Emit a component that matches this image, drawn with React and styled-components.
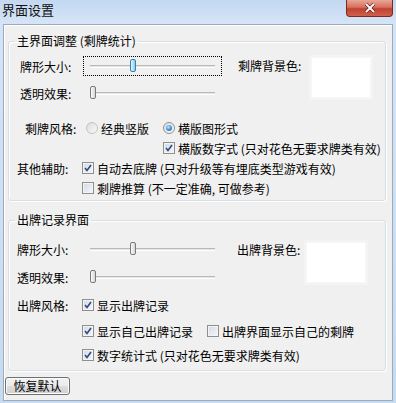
import styled, { createGlobalStyle } from "styled-components";

const GlobalStyle = createGlobalStyle`
  html, body { margin: 0; padding: 0; background: #c4d8ef; }
  body {
    font-family: "Noto Sans CJK SC", "Noto Sans", sans-serif;
    font-size: 12px;
    color: #000;
  }
`;

const Window = styled.div`
  width: 396px;
  height: 403px;
  box-sizing: border-box;
  display: flex;
  flex-direction: column;
  padding: 0 3px 2px 3px;
  background: linear-gradient(to bottom, #c3d8f1 0, #d4e4f6 22px, #c6daf0 100%);
`;

const TitleBar = styled.div`
  height: 24px;
  flex: none;
  display: flex;
  justify-content: space-between;
  align-items: flex-start;
`;

const Title = styled.span`
  margin-left: -1px;
  line-height: 20px;
  font-size: 13px;
  color: #111;
`;

const CloseButton = styled.div`
  width: 47px;
  height: 17px;
  box-sizing: border-box;
  border: 1px solid #7a2a20;
  border-top: none;
  border-radius: 0 0 4px 4px;
  background: linear-gradient(to bottom, #e8a797 0%, #d76f5e 45%, #c2402f 55%, #d0604c 100%);
  display: flex;
  align-items: center;
  justify-content: center;
`;

const Body = styled.div`
  flex: 1;
  border: 1px solid #9eabba;
  background: #f0f0f0;
  box-shadow: inset 1px 1px 0 #fff;
  display: flex;
  flex-direction: column;
  align-items: flex-start;
`;

const Group = styled.fieldset`
  align-self: stretch;
  margin: ${(p) => p.$top}px 6px 0 4px;
  padding: 0 0 ${(p) => p.$bottom}px 0;
  border: 1px solid #d5dfe5;
  border-radius: 3px;
  box-shadow: inset 1px 1px 0 #fff, 1px 1px 0 #fff;
  min-inline-size: 0;
`;

const Legend = styled.legend`
  margin-left: 6px;
  padding: 0 2px;
  line-height: 16px;
`;

const Top = styled.div`
  display: flex;
  align-items: flex-start;
  margin-top: ${(p) => p.$mt}px;
`;

const SliderCol = styled.div`
  display: flex;
  flex-direction: column;
`;

const Row = styled.div`
  display: flex;
  align-items: center;
  height: 20px;
  margin-top: ${(p) => p.$mt || 0}px;
  padding-left: ${(p) => p.$indent || 0}px;
  white-space: nowrap;
`;

const Label = styled.span`
  width: ${(p) => p.$w}px;
  flex: none;
`;

const ColorPick = styled.div`
  display: flex;
  align-items: flex-start;
  margin-left: ${(p) => p.$ml}px;
  margin-top: ${(p) => p.$mt}px;
`;

const ColorLabel = styled.span`
  width: ${(p) => p.$w}px;
  line-height: 20px;
  white-space: nowrap;
`;

const Swatch = styled.div`
  width: 58px;
  height: 39px;
  margin-top: ${(p) => p.$mt}px;
  background: #fff;
  box-shadow: 0 0 0 1px #f7f7f7, 0 0 0 3px #f4f4f4;
`;

const SliderBox = styled.div`
  width: 139px;
  height: 20px;
  box-sizing: border-box;
  border: 1px dotted ${(p) => (p.$focused ? "#000" : "transparent")};
  padding: 0 6px;
  display: flex;
  align-items: center;
`;

const Track = styled.div`
  position: relative;
  flex: 1;
  height: 3px;
  box-sizing: border-box;
  border-top: 1px solid #b9b9b9;
  border-bottom: 1px solid #fff;
  background: #e4e4e4;
`;

const Thumb = styled.div`
  position: absolute;
  top: 50%;
  width: 6px;
  height: 13px;
  margin-top: -7px;
  box-sizing: border-box;
  border-radius: 2px;
  border: 1px solid ${(p) => (p.$focused ? "#3c7fb1" : "#7a7a7a")};
  background: ${(p) =>
    p.$focused
      ? "linear-gradient(to right, #e5f6fd, #7fd0f0)"
      : "linear-gradient(to right, #fbfbfb, #d6d6d6)"};
`;

const Choice = styled.span`
  display: inline-flex;
  align-items: center;
  gap: 3px;
  margin-left: ${(p) => p.$ml || 0}px;
`;

const Box = styled.span`
  width: 12px;
  height: 12px;
  box-sizing: border-box;
  border: 1px solid #8e8f8f;
  background: linear-gradient(135deg, #d2dae4, #f6f7f9);
  box-shadow: inset 0 0 0 1px #f4f4f4;
  display: inline-flex;
  align-items: center;
  justify-content: center;
  flex: none;
`;

const Circle = styled.span`
  width: 12px;
  height: 12px;
  box-sizing: border-box;
  border-radius: 50%;
  border: 1px solid ${(p) => (p.$faded ? "#c2c2c2" : "#8e8f8f")};
  background: linear-gradient(135deg, #dcdcdc, #fafafa);
  display: inline-flex;
  align-items: center;
  justify-content: center;
  flex: none;
`;

const Dot = styled.span`
  width: 6px;
  height: 6px;
  border-radius: 50%;
  background: radial-gradient(circle at 40% 35%, #c4e9fc 0, #3a8fd3 55%, #1b4f8e 100%);
`;

const Button = styled.button`
  margin: 6px 0 0 1px;
  width: 65px;
  height: 18px;
  padding: 0;
  font: inherit;
  font-size: 12px;
  line-height: 16px;
  color: #000;
  border: 1px solid #707070;
  border-radius: 3px;
  background: linear-gradient(to bottom, #f2f2f2 0%, #ebebeb 50%, #dddddd 51%, #cfcfcf 100%);
  box-shadow: inset 0 0 0 1px #fcfcfc;
`;

const Slider = ({ value, focused }) => {
  const left = Math.round((value / 100) * (125 - 6));
  return (
    <SliderBox $focused={focused}>
      <Track>
        <Thumb $focused={focused} style={{ left }} />
      </Track>
    </SliderBox>
  );
};

const Checkbox = ({ checked, ml, children }) => (
  <Choice $ml={ml}>
    <Box>
      {checked && (
        <svg width="8" height="8" viewBox="0 0 8 8">
          <polyline points="1,4 3,6.5 7,1" fill="none" stroke="#2f4a86" strokeWidth="1.6" />
        </svg>
      )}
    </Box>
    {children}
  </Choice>
);

const Radio = ({ checked, faded, ml, children }) => (
  <Choice $ml={ml}>
    <Circle $faded={faded}>{checked && <Dot />}</Circle>
    {children}
  </Choice>
);

export default function App() {
  return (
    <>
      <GlobalStyle />
      <Window>
        <TitleBar>
          <Title>界面设置</Title>
          <CloseButton>
            <svg width="12" height="10" viewBox="0 0 12 10">
              <path d="M2 1 L10 9 M10 1 L2 9" stroke="#5a1d16" strokeWidth="3.2" />
              <path d="M2 1 L10 9 M10 1 L2 9" stroke="#fff" strokeWidth="1.8" />
            </svg>
          </CloseButton>
        </TitleBar>
        <Body>
          <Group $top={8} $bottom={2}>
            <Legend>主界面调整 (剩牌统计)</Legend>
            <Top $mt={6}>
              <SliderCol>
                <Row $mt={1} $indent={11}>
                  <Label $w={63}>牌形大小:</Label>
                  <Slider value={34} focused />
                </Row>
                <Row $mt={7} $indent={11}>
                  <Label $w={63}>透明效果:</Label>
                  <Slider value={0} />
                </Row>
              </SliderCol>
              <ColorPick $ml={16} $mt={1}>
                <ColorLabel $w={74}>剩牌背景色:</ColorLabel>
                <Swatch $mt={2} />
              </ColorPick>
            </Top>
            <Row $mt={15} $indent={16}>
              <Label $w={61}>剩牌风格:</Label>
              <Radio faded>经典竖版</Radio>
              <Radio checked ml={14}>横版图形式</Radio>
            </Row>
            <Row $indent={154}>
              <Checkbox checked>横版数字式 (只对花色无要求牌类有效)</Checkbox>
            </Row>
            <Row $indent={8}>
              <Label $w={65}>其他辅助:</Label>
              <Checkbox checked>自动去底牌 (只对升级等有埋底类型游戏有效)</Checkbox>
            </Row>
            <Row $indent={73}>
              <Checkbox>剩牌推算 (不一定准确, 可做参考)</Checkbox>
            </Row>
          </Group>

          <Group $top={11} $bottom={5}>
            <Legend>出牌记录界面</Legend>
            <Top $mt={11}>
              <SliderCol>
                <Row $indent={8}>
                  <Label $w={66}>牌形大小:</Label>
                  <Slider value={34} />
                </Row>
                <Row $mt={8} $indent={8}>
                  <Label $w={66}>透明效果:</Label>
                  <Slider value={0} />
                </Row>
              </SliderCol>
              <ColorPick $ml={15} $mt={1}>
                <ColorLabel $w={70}>出牌背景色:</ColorLabel>
                <Swatch $mt={3} />
              </ColorPick>
            </Top>
            <Row $mt={8} $indent={8}>
              <Label $w={65}>出牌风格:</Label>
              <Checkbox checked>显示出牌记录</Checkbox>
            </Row>
            <Row $mt={6} $indent={73}>
              <Checkbox checked>显示自己出牌记录</Checkbox>
              <Checkbox ml={14}>出牌界面显示自己的剩牌</Checkbox>
            </Row>
            <Row $mt={4} $indent={73}>
              <Checkbox checked>数字统计式 (只对花色无要求牌类有效)</Checkbox>
            </Row>
          </Group>

          <Button>恢复默认</Button>
        </Body>
      </Window>
    </>
  );
}
